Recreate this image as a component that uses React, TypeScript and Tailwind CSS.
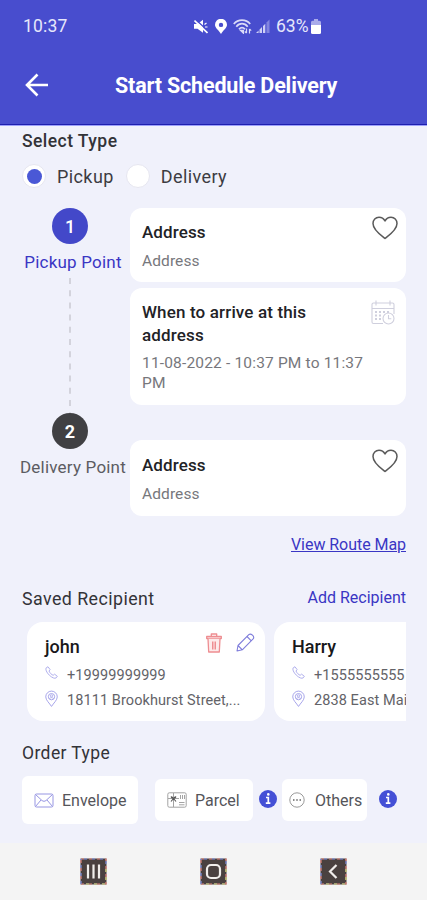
import React, { useState } from 'react';
import { clsx } from 'clsx';

interface IconProps {
  className?: string;
}

interface Recipient {
  id: number;
  name: string;
  phone: string;
  address: string;
}

const recipients: Recipient[] = [
  { id: 1, name: 'john', phone: '+19999999999', address: '18111 Brookhurst Street,...' },
  { id: 2, name: 'Harry', phone: '+1555555555', address: '2838 East Mai' },
];

const HeartIcon: React.FC<IconProps> = ({ className }) => (
  <svg className={className} viewBox="0 0 26 24" fill="none" stroke="#5a5a5a" strokeWidth="1.500" strokeLinejoin="round">
    <path d="M13 22.400C10 20 1 14.200 1 7.500 1 4 3.600 1.200 7 1.200c2.800 0 4.800 1.500 6 3.800 1.200-2.300 3.200-3.800 6-3.800 3.400 0 6 2.800 6 6.300 0 6.700-9 12.500-12 14.900z" />
  </svg>
);

const CalendarIcon: React.FC<IconProps> = ({ className }) => (
  <svg className={className} viewBox="0 0 24 25" fill="none" stroke="#cfcfdd" strokeWidth="1.100">
    <path d="M12 23.500H2.500a1.500 1.500 0 0 1-1.500-1.500V4.500A1.500 1.500 0 0 1 2.500 3h19A1.500 1.500 0 0 1 23 4.500V14M1 8.500h22M5 .5v5M19 .5v5" />
    <path d="M4 12h2M8 12h2M12 12h2M16 12h2M4 15.500h2M8 15.500h2M4 19h2M8 19h2" strokeWidth="2" />
    <circle cx="17.500" cy="18.500" r="5.500" />
    <path d="M17.500 15v3.800h2.800" />
  </svg>
);

const PhoneIcon: React.FC<IconProps> = ({ className }) => (
  <svg className={className} viewBox="0 0 14 14" fill="none" stroke="#aaa9ea" strokeWidth="1" strokeLinejoin="round">
    <path d="M3.200.8 1.300 2C0 4.500 3 8.500 5.500 10.600c2.200 1.900 5 3.300 6.500 2.200l1.300-1.700-3-2.300-1.500 1.200C7.200 9.500 4.900 7.200 4.300 5.400l1.200-1.500z" />
  </svg>
);

const PinIcon: React.FC<IconProps> = ({ className }) => (
  <svg className={className} viewBox="0 0 14 18" fill="none" stroke="#a09ee8" strokeWidth="1">
    <path d="M7 17C4.800 13.500.8 10.200.8 6.700a6.200 6.200 0 0 1 12.400 0C13.200 10.200 9.200 13.500 7 17z" />
    <circle cx="7" cy="6.500" r="3.400" />
    <circle cx="7" cy="5.700" r="1.200" strokeWidth=".8" />
    <path d="M4.700 8.800c.8-1.700 3.800-1.700 4.600 0" strokeWidth=".8" />
  </svg>
);

const TrashIcon: React.FC<IconProps> = ({ className }) => (
  <svg className={className} viewBox="0 0 16 20" fill="none" stroke="#ee8d91" strokeWidth="1.300" strokeLinejoin="round">
    <path d="M.7 3.500h14.600v2H.7zM5.300 3.300V1h5.400v2.300" />
    <path d="M2 5.700l.7 13.300h10.600L14 5.700" fill="#fdeaea" />
    <path d="M6.500 8.500v8M8 8.500v8M9.500 8.500v8" strokeWidth="1" />
  </svg>
);

const PencilIcon: React.FC<IconProps> = ({ className }) => (
  <svg className={className} viewBox="0 0 19 19" fill="none" stroke="#7f7ddb" strokeWidth="1.100" strokeLinejoin="round">
    <path d="M1 18l1-5.500L12.800 1.700c2-2 6.300 2 4.300 4.200L6.300 16.800zM2 12.500l4.300 4.300M11 3.500l4.300 4.300" />
  </svg>
);

const EnvelopeIcon: React.FC<IconProps> = ({ className }) => (
  <svg className={className} viewBox="0 0 20 15" fill="none" stroke="#9796e3" strokeWidth="1" strokeLinejoin="round">
    <rect x="1" y="1" width="18" height="13" rx="1.500" />
    <path d="M1.500 1.500 8 7.500c1.200 1 2.800 1 4 0l6.500-6M1.500 13.500 7 7M18.500 13.500 13 7" />
  </svg>
);

const ParcelIcon: React.FC<IconProps> = ({ className }) => (
  <svg className={className} viewBox="0 0 20 16" fill="none" stroke="#a3a3a3" strokeWidth="1">
    <rect x=".8" y=".8" width="18.400" height="14.400" rx="1.500" />
    <path d="M6.500 1v14M1 6.500h11" />
    <path d="M6.500 6.500C4 3 3 5.500 6.500 6.500c3.500-1 2.500-3.500 0 0L4 9.500M6.500 6.500 9 9.500" stroke="#555" strokeWidth="1.100" />
    <path d="M13.500 3v4M15.500 3v4M17.500 3v4M12 10.500h5.500M12 12.800h5.500" />
  </svg>
);

const OthersIcon: React.FC<IconProps> = ({ className }) => (
  <svg className={className} viewBox="0 0 16 16" fill="none" stroke="#999">
    <circle cx="8" cy="8" r="7.200" />
    <path d="M4 8h1.500M7.250 8h1.500M10.500 8h1.500" stroke="#666" strokeWidth="1.500" />
  </svg>
);

const InfoIcon: React.FC<IconProps> = ({ className }) => (
  <svg className={className} viewBox="0 0 18 18" fill="none">
    <circle cx="9" cy="9" r="9" fill="#4450d6" />
    <path d="M7 7.500h2.300v5.700M6.800 13.200h4.600" stroke="#fff" strokeWidth="1.700" />
    <circle cx="9.300" cy="4.400" r="1.300" fill="#fff" />
  </svg>
);

const StatusBar = () => (
  <div className="flex h-[52px] items-center pl-[23px] text-[#e6e7fb]">
    <span className="w-[171px] text-[17.500px] leading-5 tracking-[0.2px]">10:37</span>
    <svg className="h-[15px] w-[14px]" viewBox="0 0 14 15">
      <path d="M0 5h3.500L9 .8v13L3.500 9.800H0z" fill="#fff" />
      <path d="M1.500 .5 14 12" stroke="#484dce" strokeWidth="1.400" />
      <path d="M.5 1.500 13.500 14" stroke="#fff" strokeWidth="1.700" />
      <path d="M10.500 5.500 12.500 4M11 8h2.500" stroke="#fff" strokeWidth="1.200" />
    </svg>
    <svg className="ml-[7px] h-[15px] w-3" viewBox="0 0 12 15">
      <path d="M6 15C4 11.500 0 9 0 5.800a6 6 0 0 1 12 0C12 9 8 11.500 6 15zM6 3.700a2.200 2.200 0 1 0 0 4.400 2.200 2.200 0 0 0 0-4.400z" fill="#fff" fillRule="evenodd" />
    </svg>
    <svg className="ml-[6px] h-[15px] w-[19px]" viewBox="0 0 19 15" fill="none" stroke="#d9daf7" strokeWidth="1.700">
      <path d="M.8 5C5-.2 13-.2 17.200 5M3.300 7.700c3.200-4 8.200-4 11.400 0M6 10.200c1.800-2.200 4.200-2.200 6 0" />
      <path d="M8 11.500h2.200v2.200z" fill="#d9daf7" />
      <path d="M13.500 14V9.500M11.800 12.500l1.700 1.700M16.500 14.500V10M16.500 10l1.700 1.700" strokeWidth="1.200" />
    </svg>
    <svg className="ml-[4px] h-[14px] w-[14px]" viewBox="0 0 14 14">
      <path d="M0 14 2.600 11.400V14zM3.500 10.500 6 8v6H3.500zM7 7l2.300-2.300V14H7z" fill="#cfd0f5" />
      <path d="M10.500 3.500 13.500.5V14h-3z" fill="#8285df" />
    </svg>
    <span className="ml-[6px] text-[17.500px] leading-5">63%</span>
    <svg className="ml-[2px] h-[15px] w-[10px]" viewBox="0 0 10 15">
      <path d="M3 0h4v2H3zM1.500 1.800h7A1.500 1.500 0 0 1 10 3.300V7H0V3.300a1.500 1.500 0 0 1 1.500-1.500z" fill="#a9abea" />
      <path d="M0 6h10v7.500A1.500 1.500 0 0 1 8.500 15h-7A1.500 1.500 0 0 1 0 13.500z" fill="#fff" />
    </svg>
  </div>
);

interface RadioProps {
  label: string;
  checked: boolean;
  onSelect: () => void;
}

const Radio: React.FC<RadioProps> = ({ label, checked, onSelect }) => (
  <button onClick={onSelect} className="flex h-6 items-center">
    <span className="flex size-6 items-center justify-center rounded-full border border-[#e6e6f0] bg-white">
      {checked && <span className="size-[15px] rounded-full bg-[#4a58d6]" />}
    </span>
    <span className="ml-[11px] pt-[2px] text-[18px] leading-6 tracking-[0.4px] text-[#3c3c42]">{label}</span>
  </button>
);

interface AddressCardProps {
  className?: string;
}

const AddressCard: React.FC<AddressCardProps> = ({ className }) => (
  <div className={clsx('flex justify-between rounded-xl bg-white pr-[8px] pl-3', className)}>
    <div>
      <h3 className="text-[17px] leading-6 font-medium tracking-[0.1px] text-[#222226]">Address</h3>
      <p className="mt-[5px] text-[15.500px] leading-6 tracking-[0.1px] text-[#77777c]">Address</p>
    </div>
    <HeartIcon className="h-[24px] w-[26px] -translate-y-[4px]" />
  </div>
);

const RecipientCard: React.FC<{ recipient: Recipient }> = ({ recipient }) => (
  <div className="h-[99px] w-[238px] shrink-0 rounded-2xl bg-white pt-[9px] pr-[10px] pl-[18px]">
    <div className="flex h-[32px] justify-between">
      <h3 className="pt-[4px] text-[18px] leading-6 font-medium text-[#18181b]">{recipient.name}</h3>
      <div className="flex gap-[14px]">
        <TrashIcon className="mt-[2px] h-[20px] w-[16px]" />
        <PencilIcon className="mt-[2px] h-[19px] w-[19px]" />
      </div>
    </div>
    <div className="flex h-6 items-center">
      <PhoneIcon className="-mt-[6px] h-[13px] w-[13px]" />
      <span className="ml-[9px] pt-px text-[14.500px] leading-6 tracking-[0.08px] text-[#636368]">
        {recipient.phone}
      </span>
    </div>
    <div className="flex h-[27px] items-center">
      <PinIcon className="-mt-[3px] h-[18px] w-[13px]" />
      <span className="ml-[9px] text-[14.500px] leading-6 tracking-[0.08px] whitespace-nowrap text-[#636368]">
        {recipient.address}
      </span>
    </div>
  </div>
);

const NavIcon: React.FC<{ children: React.ReactNode }> = ({ children }) => (
  <svg className="size-[27px]" viewBox="0 0 27 27" fill="none" stroke="#f1eeec" strokeWidth="2.200">
    <rect x=".5" y=".5" width="26" height="26" fill="#4a4140" stroke="none" />
    {/* coloured fringe round the key */}
    <g strokeWidth="1.200" strokeDasharray="3 5">
      <rect x="1" y="1" width="25" height="25" stroke="#e2857c" />
      <rect x="1" y="1" width="25" height="25" stroke="#7f8fe0" strokeDashoffset="-3" />
      <path d="M6 26h20V6" stroke="#e0d654" />
    </g>
    {children}
  </svg>
);

const NavBar = () => (
  <div className="flex h-[57px] items-center justify-between bg-[#f4f4f4] px-[80px]">
    <NavIcon>
      <path d="M8 6.500v14M13.500 6.500v14M19 6.500v14" />
    </NavIcon>
    <NavIcon>
      <rect x="7" y="7" width="13" height="13" rx="4" />
    </NavIcon>
    <NavIcon>
      <path d="M16.500 7 10 13.500l6.500 6.500" />
    </NavIcon>
  </div>
);

const App: React.FC = () => {
  const [type, setType] = useState<'pickup' | 'delivery'>('pickup');

  return (
    <div className="flex h-[900px] w-[427px] flex-col overflow-hidden bg-[#f0f1fb] font-['Roboto',sans-serif]">
      <header className="h-[125px] shrink-0 border-b border-[#1e1fae] bg-[#484dce]">
        <StatusBar />
        <div className="flex h-[66px] items-center pl-[25px]">
          <svg className="h-[24px] w-[24px]" viewBox="0 0 24 24" fill="none" stroke="#fff" strokeWidth="2.600">
            <path d="M23 12H2M12.500 1.500 2 12l10.500 10.500" />
          </svg>
          <h1 className="ml-[66px] pt-[2px] text-[21.500px] leading-7 font-bold tracking-[-0.17px] text-white">
            Start Schedule Delivery
          </h1>
        </div>
      </header>

      <main className="flex-1 border-t border-[#9da0fa] px-[22px]">
        <h2 className="pt-[3px] text-[17.500px] leading-6 font-medium tracking-[0.45px] text-[#333338]">Select Type</h2>
        <div className="mt-[11px] flex gap-[12px]">
          <Radio label="Pickup" checked={type === 'pickup'} onSelect={() => setType('pickup')} />
          <Radio label="Delivery" checked={type === 'delivery'} onSelect={() => setType('delivery')} />
        </div>

        <div className="-mr-px -ml-[6px] mt-[20px] flex">
          <div className="flex w-[114px] shrink-0 flex-col items-center pr-[6px] whitespace-nowrap">
            <span className="flex size-9 items-center justify-center rounded-full bg-[#4348c9] text-[18px] font-medium text-white">
              1
            </span>
            <span className="mt-[6px] translate-x-[3px] text-[17px] leading-6 tracking-[0.2px] text-[#3a36c4]">
              Pickup Point
            </span>
            <svg className="mt-[4px] h-[135px] w-[2px]" viewBox="0 0 2 135">
              <path d="M1 0v135" stroke="#c9c9d2" strokeWidth="1.500" strokeDasharray="6 6.200" />
            </svg>
            <span className="flex size-9 items-center justify-center rounded-full bg-[#404043] text-[18px] font-bold text-white">
              2
            </span>
            <span className="mt-[6px] translate-x-[3px] text-[17px] leading-6 tracking-[0.2px] text-[#5c5c62]">
              Delivery Point
            </span>
          </div>
          <div className="flex min-w-0 flex-1 flex-col">
            <AddressCard className="h-[74px] pt-[12px]" />
            <div className="mt-[6px] flex h-[117px] justify-between rounded-xl bg-white pt-[13px] pr-[11px] pl-3">
              <div className="w-[226px]">
                <h3 className="text-[17px] leading-[23px] font-medium tracking-[0.15px] text-[#222226]">
                  When to arrive at this
                  <br />
                  address
                </h3>
                <p className="mt-[6px] text-[15.500px] leading-[20px] tracking-[0.17px] whitespace-nowrap text-[#77777c]">
                  11-08-2022 - 10:37 PM to 11:37
                  <br />
                  PM
                </p>
              </div>
              <CalendarIcon className="-mt-px h-[25px] w-[24px] shrink-0" />
            </div>
            <AddressCard className="mt-[35px] h-[76px] pt-[13px]" />
          </div>
        </div>

        <div className="mt-[17px] -mr-px flex justify-end">
          <a className="text-[16px] leading-6 tracking-[-0.05px] text-[#3a36c4] underline">View Route Map</a>
        </div>

        <div className="mt-[28px] flex h-[28px] items-center justify-between">
          <h2 className="text-[17.800px] leading-6 tracking-[0.45px] text-[#333338]">Saved Recipient</h2>
          <a className="-mt-[3px] -mr-px text-[16px] leading-6 text-[#3a36c4]">Add Recipient</a>
        </div>
        <div className="-mr-px mt-[9px] flex gap-[9px] overflow-hidden pl-[5px]">
          {recipients.map(recipient => (
            <RecipientCard key={recipient.id} recipient={recipient} />
          ))}
        </div>

        <h2 className="mt-[20px] text-[17.500px] leading-6 tracking-[0.4px] text-[#333338]">Order Type</h2>
        <div className="mt-[11px] flex h-[48px] items-center text-[16px] leading-6 text-[#55555a]">
          <button className="flex h-[48px] w-[116px] items-center rounded-md bg-white pl-[12px]">
            <EnvelopeIcon className="h-[15px] w-[20px]" />
            <span className="ml-[8px] pt-[2px]">Envelope</span>
          </button>
          <button className="ml-[17px] flex h-[42px] w-[98px] items-center rounded-md bg-white pl-[12px]">
            <ParcelIcon className="h-[16px] w-[20px]" />
            <span className="ml-[8px] pt-[2px]">Parcel</span>
          </button>
          <InfoIcon className="ml-[6px] -mt-[3px] size-[18px]" />
          <button className="ml-[5px] flex h-[42px] w-[85px] items-center rounded-md bg-white pl-[7px]">
            <OthersIcon className="size-4" />
            <span className="ml-[10px] pt-[2px]">Others</span>
          </button>
          <InfoIcon className="ml-[12px] -mt-[3px] size-[18px]" />
        </div>
      </main>

      <NavBar />
    </div>
  );
};

export default App;
